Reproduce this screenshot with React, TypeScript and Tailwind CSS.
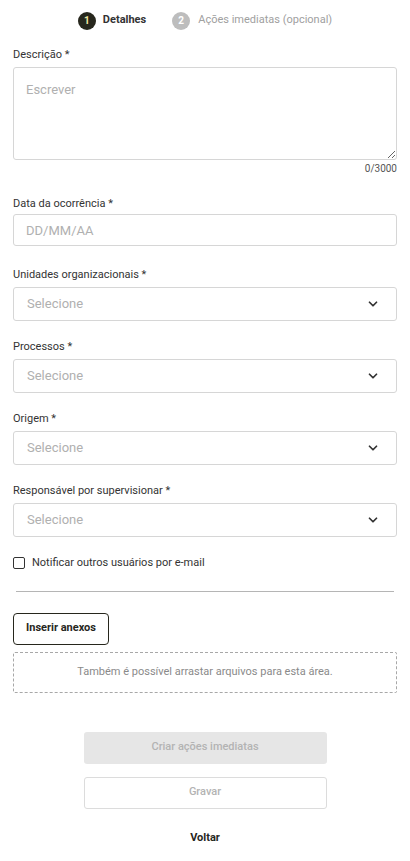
import { ChevronDown } from "lucide-react";

const Label = ({ text }: { text: string }) => (
    <label className="block text-[11px] leading-4 text-[#333333]">{text}</label>
);

const SelectField = ({ label }: { label: string }) => (
    <div className="mb-[18px]">
        <Label text={label} />
        <div className="mt-[4px] h-[34px] w-full rounded-[3px] border border-[#d6d6d6] flex items-center justify-between pl-[13px] pr-[16px]">
            <span className="text-[13px] text-[#b0b0b0]">Selecione</span>
            <ChevronDown className="w-[14px] h-[14px] text-[#333333]" strokeWidth={3} />
        </div>
    </div>
);

export default function App() {
    return (
        <div
            className="w-[410px] min-h-[861px] bg-white px-[13px] pt-[2px] pb-4"
            style={{ fontFamily: "Roboto, 'Liberation Sans', sans-serif" }}
        >
            {/* stepper */}
            <div className="h-[37px] flex items-center justify-center">
                <div className="flex items-center">
                    <span className="w-[18px] h-[18px] rounded-full bg-[#27271d] text-[#f2e9a6] text-[10px] font-bold flex items-center justify-center">
                        1
                    </span>
                    <span className="ml-[7px] text-[11px] font-bold text-[#333333]">Detalhes</span>
                </div>
                <div className="flex items-center ml-[26px]">
                    <span className="w-[18px] h-[18px] rounded-full bg-[#bdbdbd] text-white text-[10px] font-bold flex items-center justify-center">
                        2
                    </span>
                    <span className="ml-[8px] text-[11px] text-[#a0a0a0]">Ações imediatas (opcional)</span>
                </div>
            </div>

            <div className="mt-[8px]">
                <Label text="Descrição *" />
                <textarea
                    placeholder="Escrever"
                    className="mt-[4px] block w-full h-[93px] rounded-[3px] border border-[#d6d6d6] px-[12px] py-[12px] text-[13px] placeholder:text-[#b0b0b0] outline-none"
                />
                <div className="text-right text-[10px] leading-4 text-[#555555] mt-[1px]">0/3000</div>
            </div>

            <div className="mt-[19px] mb-[21px]">
                <Label text="Data da ocorrência *" />
                <input
                    placeholder="DD/MM/AA"
                    className="mt-[2px] block w-full h-[32px] rounded-[3px] border border-[#d6d6d6] px-[12px] text-[13px] placeholder:text-[#b0b0b0] outline-none"
                />
            </div>

            <SelectField label="Unidades organizacionais *" />
            <SelectField label="Processos *" />
            <SelectField label="Origem *" />
            <SelectField label="Responsável por supervisionar *" />

            <label className="flex items-center mt-[1px]">
                <span className="w-[12px] h-[12px] border border-[#333333] rounded-[2px]" />
                <span className="ml-[7px] text-[11px] text-[#333333]">Notificar outros usuários por e-mail</span>
            </label>

            <div className="mx-[3px] mt-[19px] border-b border-[#b5b5b5]" />

            <button className="mt-[21px] h-[32px] px-[12px] rounded-[4px] border border-[#27271d] text-[11px] font-bold text-[#27271d]">
                Inserir anexos
            </button>

            <div className="mt-[7px] h-[41px] border border-dashed border-[#a8a8a8] rounded-[2px] flex items-center justify-center text-[11px] text-[#8a8a8a]">
                Também é possível arrastar arquivos para esta área.
            </div>

            <div className="flex flex-col items-center mt-[39px]">
                <button className="w-[243px] h-[32px] rounded-[3px] bg-[#e6e6e6] text-[11px] font-medium text-[#b3b3b3]">
                    Criar ações imediatas
                </button>
                <button className="mt-[13px] w-[243px] h-[32px] rounded-[3px] border border-[#dcdcdc] text-[11px] font-medium text-[#b3b3b3]">
                    Gravar
                </button>
                <button className="mt-[21px] text-[11px] font-bold text-[#27271d]">Voltar</button>
            </div>
        </div>
    );
}
